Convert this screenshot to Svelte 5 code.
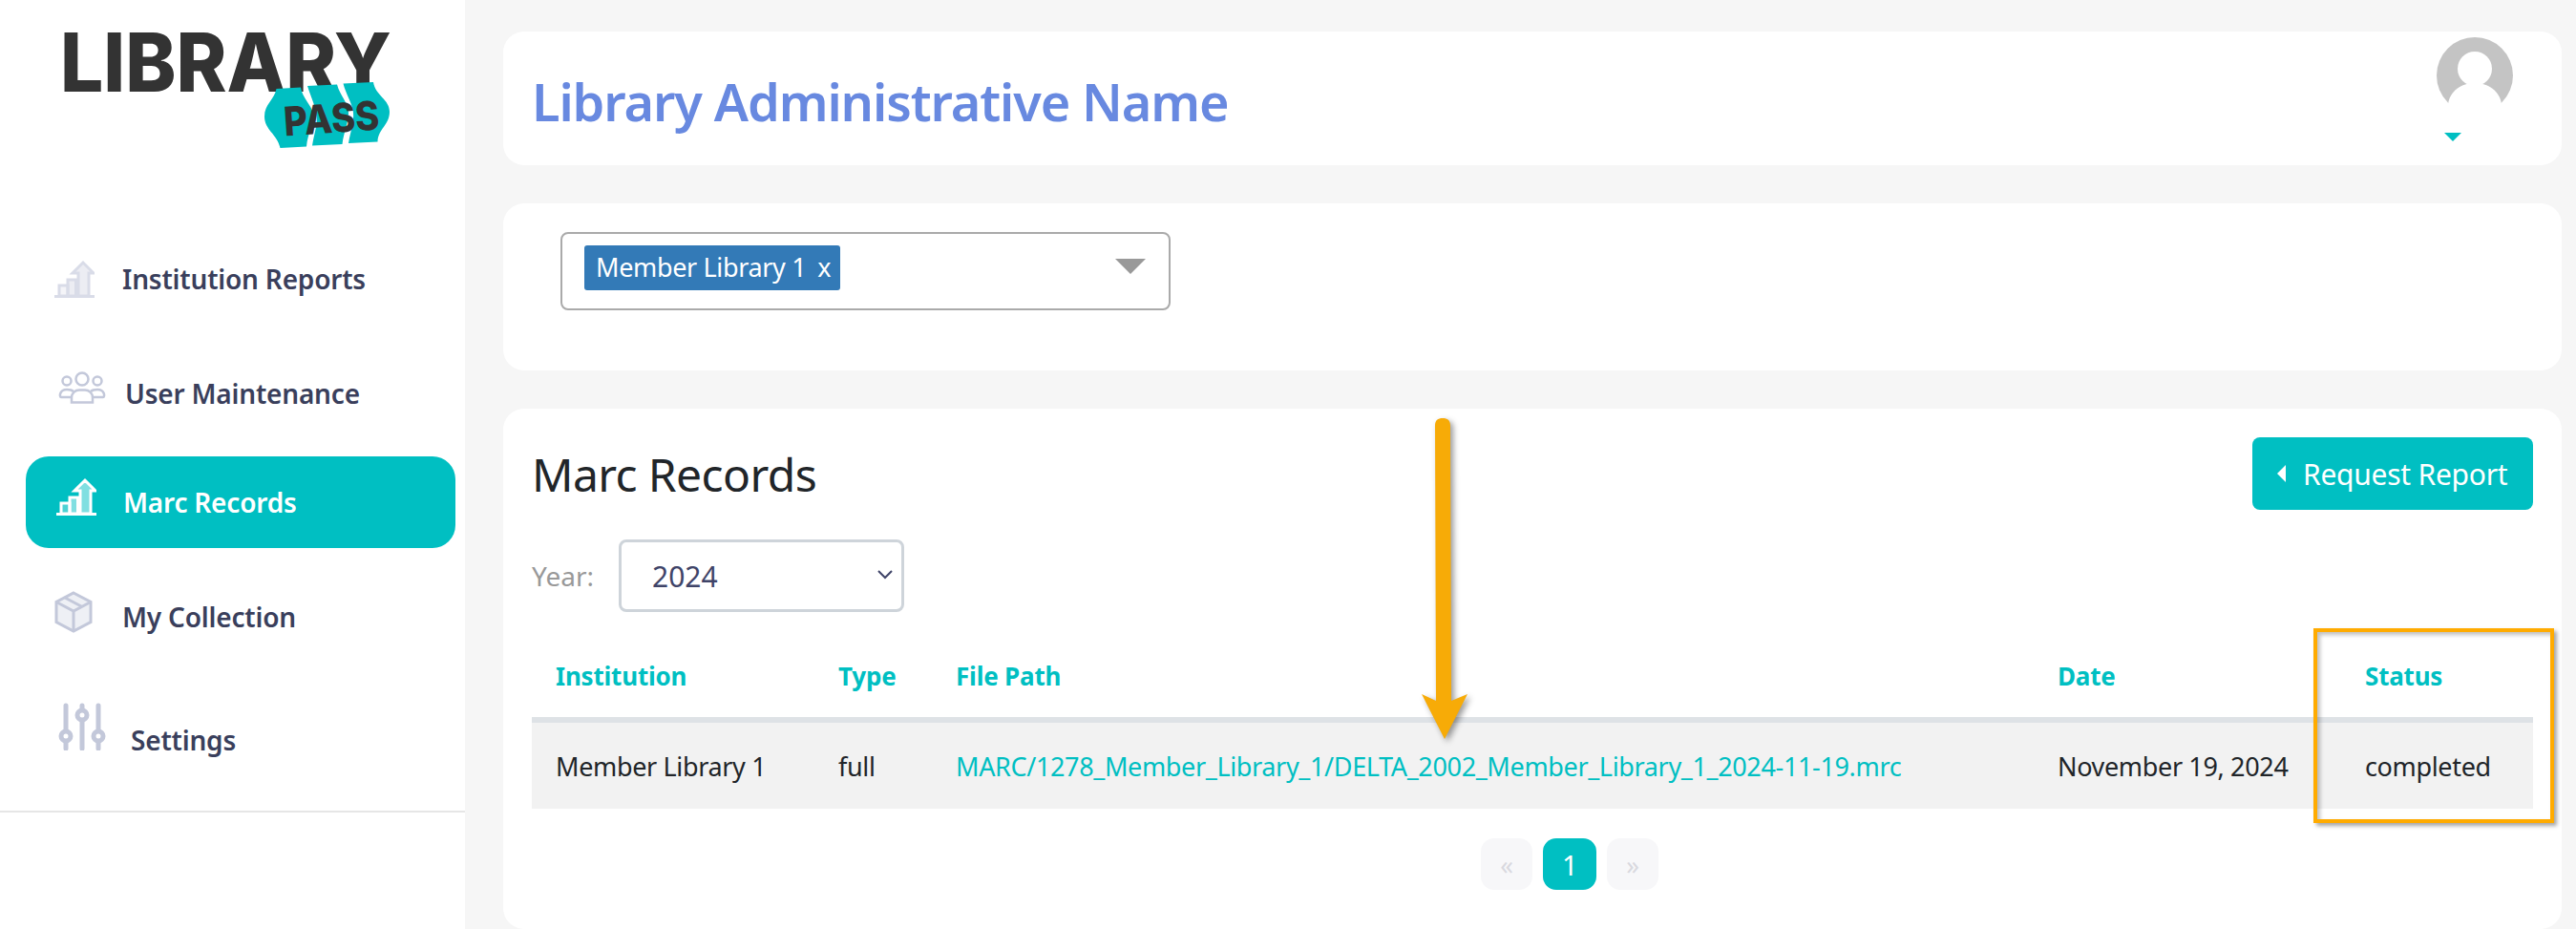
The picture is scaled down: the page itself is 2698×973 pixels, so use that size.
<script>
    const columns = [
        {label: 'Institution', width: 296},
        {label: 'Type', width: 123},
        {label: 'File Path', width: 1154},
        {label: 'Date', width: 322},
        {label: 'Status', width: 201}
    ]
    const row = {
        institution: 'Member Library 1',
        type: 'full',
        path: 'MARC/1278_Member_Library_1/DELTA_2002_Member_Library_1_2024-11-19.mrc',
        date: 'November 19, 2024',
        status: 'completed'
    }
</script>

{#snippet chart()}
    <svg viewBox="0 0 42 40" width="42" height="40" fill="none" stroke="currentColor" stroke-width="3">
        <path d="M0 38.500h42"/>
        <path d="M5 38v-11h9v11z" fill="currentColor" fill-opacity=".3"/>
        <path d="M14 38v-17h8.500v17z" fill="currentColor" fill-opacity=".5"/>
        <path d="M25 38v-24h-6l11-11 11 11h-5v24z" fill="currentColor" fill-opacity=".5"/>
    </svg>
{/snippet}

<div class="page">
    <aside class="sidebar">
        <svg class="logo" viewBox="0 0 420 165" width="420" height="165">
            <text x="63" y="96" class="logo-main" textLength="347" lengthAdjust="spacingAndGlyphs">LIBRARY</text>
            <path class="logo-tag" d="M289.500 93 L315 91.500 C317 104 327 110 328 120 C329 131 322 140 321 153.500 L293.500 155 C290 140 277 136 277 122 C277 109 287 105 289.500 93Z"/>
            <path class="logo-tag" d="M322 90 L353 88.500 C356 100 365 108 365 118 C365 129 360 138 358.500 151 L327 152.500 C329 140 333 130 331.500 120 C330 110 325 100 322 90Z"/>
            <path class="logo-tag" d="M359.500 87.500 L391 86 C393 100 408 104 408 117 C408 131 396 135 395.500 148.500 L365 150 C367 138 371 128 370 118 C369 108 362 98 359.500 87.500Z"/>
            <text x="297" y="139" class="logo-sub" textLength="100" lengthAdjust="spacingAndGlyphs" transform="rotate(-4 347 122)">PASS</text>
        </svg>

        <nav>
            <a class="item reports">
                <span class="icon soft">{@render chart()}</span>
                <span>Institution Reports</span>
            </a>
            <a class="item users">
                <span class="icon">
                    <svg viewBox="0 0 50 34" width="50" height="34" fill="none" stroke="currentColor" stroke-width="2.500">
                        <circle cx="25" cy="8" r="6.500"/>
                        <circle cx="9" cy="10" r="4.500"/>
                        <circle cx="41" cy="10" r="4.500"/>
                        <path d="M14 32.500v-5c0-5 4-8 8-8h6c4 0 8 3 8 8v5z"/>
                        <path d="M14 27H3c-2 0-2-8 6-8 3 0 5 0 7 2"/>
                        <path d="M36 27h11c2 0 2-8-6-8-3 0-5 0-7 2"/>
                    </svg>
                </span>
                <span>User Maintenance</span>
            </a>
            <a class="item marc active">
                <span class="icon">{@render chart()}</span>
                <span>Marc Records</span>
            </a>
            <a class="item collection">
                <span class="icon">
                    <svg viewBox="0 0 40 44" width="40" height="44" stroke="currentColor" stroke-width="3" fill="#eef0f5">
                        <path d="M20 2 38 11.500v21L20 42 2 32.500v-21z"/>
                        <path d="M2 11.500 20 21l18-9.500M20 21v21" fill="none"/>
                        <path d="M11 7l18 9.500" fill="none"/>
                    </svg>
                </span>
                <span>My Collection</span>
            </a>
            <a class="item settings">
                <span class="icon">
                    <svg viewBox="0 0 50 50" width="50" height="50" fill="none" stroke="currentColor" stroke-width="5" stroke-linecap="round">
                        <path d="M8 3v45M25 3v45M42 3v45"/>
                        <circle cx="8" cy="35" r="5" fill="#fff"/>
                        <circle cx="25" cy="13" r="5" fill="#fff"/>
                        <circle cx="42" cy="35" r="5" fill="#fff"/>
                    </svg>
                </span>
                <span>Settings</span>
            </a>
        </nav>
        <hr />
    </aside>

    <main>
        <header class="card top">
            <h1>Library Administrative Name</h1>
            <div class="profile">
                <svg viewBox="0 0 80 80" width="80" height="80">
                    <circle cx="40" cy="40" r="40" fill="#c4c4c4"/>
                    <circle cx="40" cy="33" r="18" fill="#fff"/>
                    <path d="M12 70C14 56 26 48 40 48s26 8 28 22v10H12z" fill="#fff"/>
                </svg>
                <span class="caret"></span>
            </div>
        </header>

        <section class="card filter">
            <div class="multi">
                <span class="chip">Member Library 1<span class="x">x</span></span>
                <span class="multi-arrow"></span>
            </div>
        </section>

        <section class="card records">
            <div class="title-row">
                <h2>Marc Records</h2>
                <button><span class="left"></span>Request Report</button>
            </div>
            <div class="year-row">
                <label for="year">Year:</label>
                <div class="year">
                    <select id="year">
                        <option>2024</option>
                    </select>
                    <svg viewBox="0 0 16 10" width="16" height="10" fill="none" stroke="#3f4468" stroke-width="2"><path d="M1 1l7 7 7-7"/></svg>
                </div>
            </div>
            <table>
                <colgroup>
                    {#each columns as col}
                        <col style="width:{col.width}px">
                    {/each}
                </colgroup>
                <thead>
                    <tr>
                        {#each columns as col}
                            <th>{col.label}</th>
                        {/each}
                    </tr>
                </thead>
                <tbody>
                    <tr>
                        <td>{row.institution}</td>
                        <td>{row.type}</td>
                        <td><a class="path">{row.path}</a></td>
                        <td>{row.date}</td>
                        <td>{row.status}</td>
                    </tr>
                </tbody>
            </table>
            <div class="pager">
                <span class="pg off">«</span>
                <span class="pg on">1</span>
                <span class="pg off">»</span>
            </div>
        </section>
    </main>

    <!-- callouts drawn over the screenshot -->
    <div class="callout-box"></div>
    <svg class="callout-arrow" viewBox="0 0 60 350" width="60" height="350">
        <path d="M18 10C18 4 21 2 26 2S34 4 34 10L35 298 52 291 28 338 4 291 19 298Z" fill="#f7ab07"/>
    </svg>
</div>

<style>
    :global(body) {
        margin: 0;
        background: #f6f6f6;
    }

    .page {
        position: relative;
        display: flex;
        height: 973px;
        overflow: hidden;
        background: #f6f6f6;
        font-family: "Noto Sans", "Open Sans", sans-serif;
        font-size: 27px;
        letter-spacing: -0.35px;
        color: #212529;
    }

    .sidebar {
        width: 487px;
        flex: none;
        background: #fff;
    }

    .logo {
        display: block;
        overflow: visible;
    }

    .logo-main {
        font-family: Inter, sans-serif;
        font-weight: 800;
        font-size: 85px;
        letter-spacing: 0;
        fill: #333;
    }

    .logo-sub {
        font-family: Inter, sans-serif;
        font-weight: 800;
        font-size: 42px;
        letter-spacing: 0;
        fill: #333;
    }

    .logo-tag {
        fill: #00bfc2;
    }

    nav {
        display: flex;
        flex-direction: column;
        padding-top: 79px;
    }

    .item {
        display: flex;
        align-items: center;
        height: 96px;
        margin: 24px 10px 0 27px;
        padding-left: 30px;
        border-radius: 24px;
        font-size: 28px;
        font-weight: 600;
        letter-spacing: -0.2px;
        color: #3a3f5c;
    }

    .icon {
        display: flex;
        color: #c3c8da;
    }

    .icon.soft {
        color: #d9dce8;
    }

    .reports {
        margin-top: 0;
    }

    .reports .icon {
        margin-right: 29px;
    }

    .users .icon {
        margin: -12px 20px 0 4px;
    }

    .marc {
        margin-top: 18px;
        color: #fff;
    }

    .marc .icon {
        margin: -12px 28px 0 2px;
        color: #fff;
    }

    .active {
        background: #00bfc2;
    }

    .collection .icon {
        margin: -10px 31px 0 0;
    }

    .settings {
        margin-top: 33px;
    }

    .settings .icon {
        margin: -28px 26px 0 4px;
    }

    hr {
        height: 2px;
        margin: 26px 0 0;
        border: 0;
        background: #e6e6e6;
    }

    main {
        flex: 1;
        display: flex;
        flex-direction: column;
        gap: 40px;
        padding: 33px 15px 0 40px;
        min-width: 0;
    }

    .card {
        background: #fff;
        border-radius: 22px;
    }

    .top {
        display: flex;
        justify-content: space-between;
        height: 140px;
        padding: 6px 51px 0 30px;
        box-sizing: border-box;
    }

    h1 {
        margin: 0;
        padding-top: 32px;
        font-size: 54px;
        line-height: 70px;
        font-weight: 600;
        letter-spacing: -1.1px;
        color: #6889e0;
    }

    .profile {
        display: flex;
        flex-direction: column;
    }

    .caret {
        width: 0;
        margin: 20px 0 0 8px;
        border: 9px solid transparent;
        border-top-color: #00bfc2;
        border-bottom: 0;
    }

    .filter {
        height: 175px;
        padding: 30px 0 0 60px;
        box-sizing: border-box;
    }

    .multi {
        display: flex;
        align-items: flex-start;
        justify-content: space-between;
        width: 639px;
        height: 82px;
        padding: 12px 24px 0 23px;
        box-sizing: border-box;
        border: 2px solid #aaa;
        border-radius: 8px;
    }

    .chip {
        height: 47px;
        width: 268px;
        box-sizing: border-box;
        padding-left: 12px;
        line-height: 45px;
        white-space: nowrap;
        color: #fff;
        background: #337ab7;
        border-radius: 3px;
    }

    .x {
        margin-left: 12px;
    }

    .multi-arrow {
        width: 0;
        margin-top: 14px;
        border: 16px solid transparent;
        border-top-color: #999;
        border-bottom: 0;
    }

    .records {
        flex: 1;
        padding: 30px 30px 0;
    }

    .title-row {
        display: flex;
        justify-content: space-between;
        align-items: center;
        height: 76px;
    }

    h2 {
        margin: 0;
        font-size: 48px;
        font-weight: 400;
        letter-spacing: -0.6px;
    }

    button {
        display: flex;
        align-items: center;
        width: 294px;
        height: 76px;
        padding: 0 0 0 26px;
        font: inherit;
        font-size: 30px;
        letter-spacing: -0.25px;
        color: #fff;
        background: #00bfc2;
        border: 0;
        border-radius: 8px;
    }

    .left {
        margin-right: 18px;
        border: 9px solid transparent;
        border-right-color: #fff;
        border-left: 0;
    }

    .year-row {
        display: flex;
        align-items: center;
        gap: 26px;
        margin-top: 31px;
    }

    label {
        font-size: 28px;
        letter-spacing: 0;
        color: #999;
    }

    .year {
        position: relative;
        width: 299px;
        height: 76px;
    }

    select {
        width: 100%;
        height: 100%;
        padding: 0 0 0 32px;
        font: inherit;
        font-size: 30px;
        color: #3f4468;
        background: #fff;
        border: 3px solid #ced4da;
        border-radius: 8px;
        appearance: none;
    }

    .year svg {
        position: absolute;
        top: 32px;
        right: 12px;
    }

    table {
        width: 2096px;
        margin-top: 24px;
        border-collapse: collapse;
        table-layout: fixed;
    }

    th, td {
        padding: 0 0 0 25px;
        text-align: left;
    }

    th {
        height: 86px;
        font-size: 26px;
        font-weight: 700;
        letter-spacing: -0.2px;
        color: #00bfc2;
        border-bottom: 6px solid #dee2e6;
    }

    td {
        height: 90px;
        background: #f2f2f2;
    }

    .path {
        color: #00bfc2;
    }

    .pager {
        display: flex;
        justify-content: center;
        gap: 11px;
        margin: 31px 0 0 78px;
    }

    .pg {
        display: flex;
        align-items: center;
        justify-content: center;
        width: 54px;
        height: 54px;
        border-radius: 14px;
        background: #f7f7f9;
        color: #d9d9df;
    }

    .pg.on {
        width: 56px;
        font-size: 29px;
        color: #fff;
        background: #00bfc2;
    }

    .callout-box {
        position: absolute;
        left: 2423px;
        top: 658px;
        width: 252px;
        height: 204px;
        box-sizing: border-box;
        border: 4px solid #ffab00;
        box-shadow: 3px 3px 4px rgba(0, 0, 0, 0.35), inset 3px 3px 4px rgba(0, 0, 0, 0.25);
    }

    .callout-arrow {
        position: absolute;
        left: 1485px;
        top: 436px;
        filter: drop-shadow(3px 3px 3px rgba(0, 0, 0, 0.4));
    }
</style>
